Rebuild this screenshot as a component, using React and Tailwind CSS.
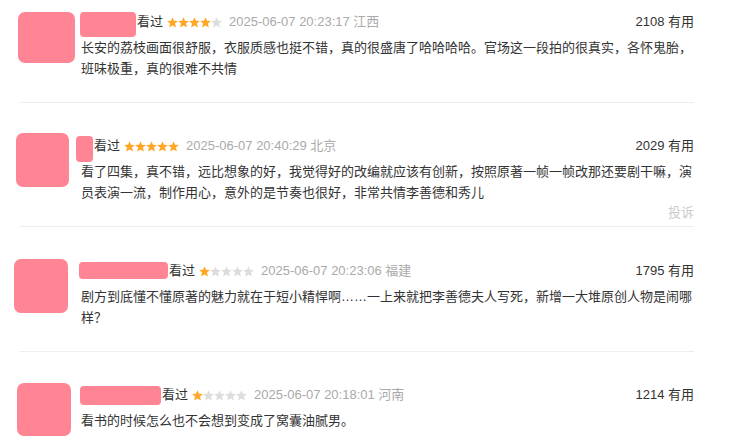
const reviews = [
  {
    avatar: "w-[57px] h-[51px] ml-[-1px] mt-0",
    name: "w-[56px] h-[25px] ml-[-1px] mt-0",
    stars: 4,
    time: "2025-06-07 20:23:17",
    place: "江西",
    useful: 2108,
    text: "长安的荔枝画面很舒服，衣服质感也挺不错，真的很盛唐了哈哈哈哈。官场这一段拍的很真实，各怀鬼胎，班味极重，真的很难不共情",
    report: false,
    pad: "pt-[12px]",
  },
  {
    avatar: "w-[53px] h-[54px] ml-[-3px] mt-[-3px]",
    name: "w-[17px] h-[26px] ml-[-5px] mt-0",
    stars: 5,
    time: "2025-06-07 20:40:29",
    place: "北京",
    useful: 2029,
    text: "看了四集，真不错，远比想象的好，我觉得好的改编就应该有创新，按照原著一帧一帧改那还要剧干嘛，演员表演一流，制作用心，意外的是节奏也很好，非常共情李善德和秀儿",
    report: true,
    pad: "pt-[33px]",
  },
  {
    avatar: "w-[54px] h-[54px] ml-[-5px] mt-[-2px]",
    name: "w-[89px] h-[17px] ml-[-2px] mt-[1px]",
    stars: 1,
    time: "2025-06-07 20:23:06",
    place: "福建",
    useful: 1795,
    text: "剧方到底懂不懂原著的魅力就在于短小精悍啊……一上来就把李善德夫人写死，新增一大堆原创人物是闹哪样？",
    report: false,
    pad: "pt-[34px]",
  },
  {
    avatar: "w-[54px] h-[53px] ml-[-2px] mt-[-2px]",
    name: "w-[81px] h-[19px] ml-[-1px] mt-[1px]",
    stars: 1,
    time: "2025-06-07 20:18:01",
    place: "河南",
    useful: 1214,
    text: "看书的时候怎么也不会想到变成了窝囊油腻男。",
    report: false,
    pad: "pt-[33px]",
    last: true,
  },
];

// fat 5-point star, fills its 11px box
function Star({ on }) {
  return (
    <svg width="11" height="11" viewBox="0 0 24 23">
      <polygon
        points="12,0 15.3,7.6 23.8,8.3 17.4,13.9 19.4,22.6 12,18.1 4.6,22.6 6.6,13.9 0.2,8.3 8.7,7.6"
        fill={on ? "#ffa726" : "#dddddd"}
      />
    </svg>
  );
}

function Review({ r }) {
  return (
    <div className={`${r.pad} ${r.last ? "" : "border-b border-[#eeeeee] pb-[3px]"}`}>
      <div className="flex items-start">
        <div className="w-[62px] shrink-0">
          <div className={`${r.avatar} rounded-[7px] bg-[#ff8494]`} />
        </div>
        <div className="flex-1 min-w-0">
          {/* header */}
          <div className="flex items-start h-[25px] leading-5">
            <div className={`${r.name} rounded-[4px] bg-[#ff8494] shrink-0`} />
            <span className="ml-[1px] text-[#333]">看过</span>
            <span className="ml-[4px] flex h-5 items-center pt-[1px]">
              {[0, 1, 2, 3, 4].map((i) => (
                <Star key={i} on={i < r.stars} />
              ))}
            </span>
            <span className="ml-[7px] text-[#aaaaaa]">
              {r.time} {r.place}
            </span>
            <span className="ml-auto text-[#333]">{r.useful} 有用</span>
          </div>
          {/* body */}
          <p className="leading-[21px] text-[#333]">{r.text}</p>
          <div className={`h-5 leading-5 text-right text-[#cccccc] ${r.report ? "" : "invisible"}`}>
            投诉
          </div>
        </div>
      </div>
    </div>
  );
}

export default function App() {
  return (
    <div
      className="min-h-screen bg-white text-[13px]"
      style={{ fontFamily: '"Liberation Sans", "Noto Sans CJK SC", sans-serif' }}
    >
      <div className="ml-[19px] w-[675px]">
        {reviews.map((r, i) => (
          <Review key={i} r={r} />
        ))}
      </div>
    </div>
  );
}
